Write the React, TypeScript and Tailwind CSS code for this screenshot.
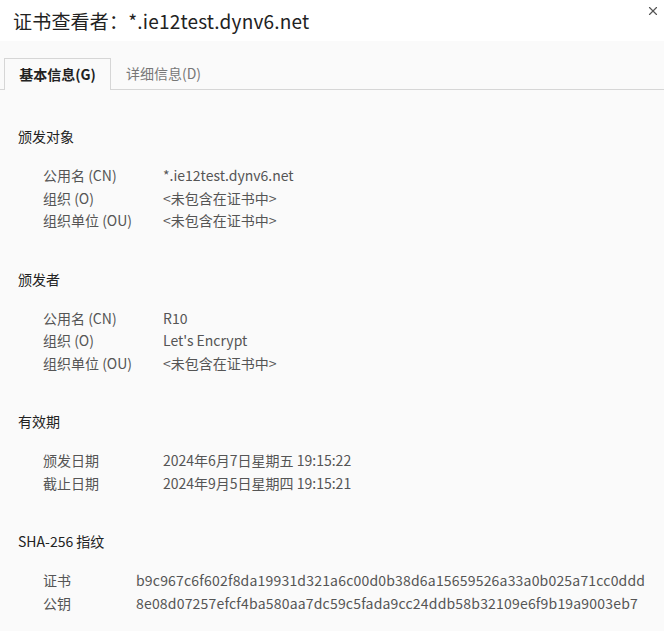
import { X } from "lucide-react";

type Row = { label: string; value: string };

const sections: { title: string; labelCol: string; mono?: boolean; rows: Row[] }[] = [
  {
    title: "颁发对象",
    labelCol: "w-[120px]",
    rows: [
      { label: "公用名 (CN)", value: "*.ie12test.dynv6.net" },
      { label: "组织 (O)", value: "<未包含在证书中>" },
      { label: "组织单位 (OU)", value: "<未包含在证书中>" },
    ],
  },
  {
    title: "颁发者",
    labelCol: "w-[120px]",
    rows: [
      { label: "公用名 (CN)", value: "R10" },
      { label: "组织 (O)", value: "Let's Encrypt" },
      { label: "组织单位 (OU)", value: "<未包含在证书中>" },
    ],
  },
  {
    title: "有效期",
    labelCol: "w-[120px]",
    rows: [
      { label: "颁发日期", value: "2024年6月7日星期五 19:15:22" },
      { label: "截止日期", value: "2024年9月5日星期四 19:15:21" },
    ],
  },
  {
    title: "SHA-256 指纹",
    labelCol: "w-[93px]",
    mono: true,
    rows: [
      { label: "证书", value: "b9c967c6f602f8da19931d321a6c00d0b38d6a15659526a33a0b025a71cc0ddd" },
      { label: "公钥", value: "8e08d07257efcf4ba580aa7dc59c5fada9cc24ddb58b32109e6f9b19a9003eb7" },
    ],
  },
];

export default function App() {
  return (
    <div
      className="w-[664px] h-[631px] overflow-hidden bg-[#fafafa] text-[14px]"
      style={{ fontFamily: '"Noto Sans CJK SC", "Noto Sans", sans-serif' }}
    >
      {/* Title bar */}
      <div className="relative h-[41px] bg-white pl-[13px] pt-[7px]">
        <h1 className="text-[19px] leading-[28px] text-[#222] tracking-[0.2px]">证书查看者：*.ie12test.dynv6.net</h1>
        <button className="absolute right-[4px] top-[4px] text-[#555]">
          <X size={14} strokeWidth={2} />
        </button>
      </div>

      {/* Tabs */}
      <div className="flex items-end h-[49px] border-b border-[#d6d6d6] pl-[4px]">
        <div className="h-[32px] w-[107px] -mb-px bg-[#fafafa] border border-b-0 border-[#d6d6d6] flex items-center justify-center font-bold text-[#222]">
          基本信息(G)
        </div>
        <div className="h-[32px] pl-[15px] flex items-center text-[#777]">详细信息(D)</div>
      </div>

      {/* Content */}
      <div className="pl-[18px] pt-[35px]">
        {sections.map((s) => (
          <div key={s.title} className="mb-[36px]">
            <div className="text-[#222] leading-[22px] mb-[17px]">{s.title}</div>
            <div className="pl-[25px]">
              {s.rows.map((r) => (
                <div key={r.label} className="flex leading-[22.5px] text-[#555] whitespace-nowrap">
                  <span className={s.labelCol}>{r.label}</span>
                  <span className={s.mono ? "tracking-[0.19px]" : ""}>{r.value}</span>
                </div>
              ))}
            </div>
          </div>
        ))}
      </div>
    </div>
  );
}
